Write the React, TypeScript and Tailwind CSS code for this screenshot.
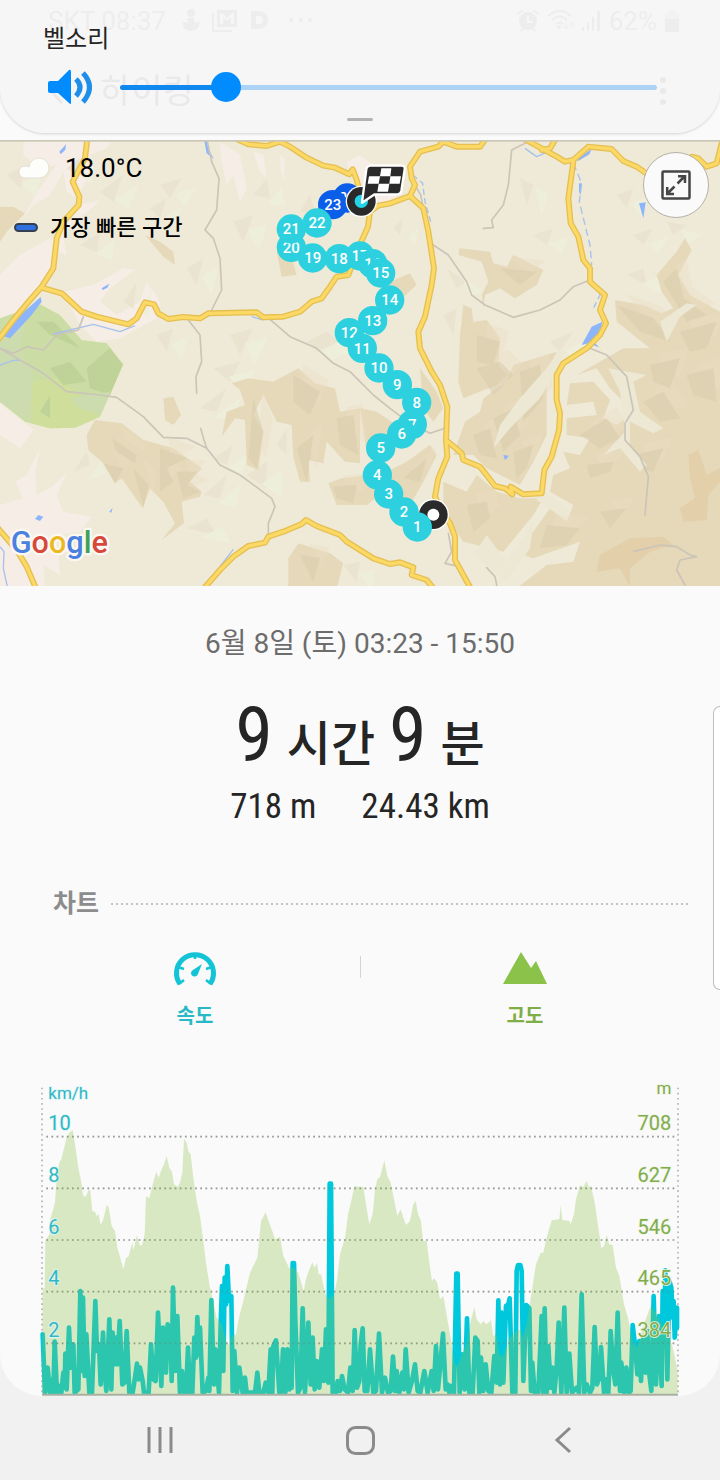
import { useState } from "react";
import type { CSSProperties, ReactNode } from "react";

const SPEED =
  "128,790 135,965 143,890 150,965 157,925 160,965 164,812 171,965 178,945 184,965 190,905 194,950 196,848 200,955 207,770 212,890 215,885 220,820 224,965 235,955 241,660 246,900 249,680 254,915 259,790 268,965 276,965 286,690 291,840 297,820 302,940 309,785 314,900 319,960 328,745 334,955 338,785 343,880 348,800 352,880 359,750 367,940 373,935 380,780 388,965 398,965 405,920 411,878 416,925 420,890 428,930 432,965 446,965 453,820 460,925 467,930 474,725 484,945 489,770 498,905 503,760 509,850 511,765 515,930 519,650 526,900 532,735 540,965 546,900 553,965 558,965 564,830 570,965 573,910 577,965 583,800 588,860 592,738 597,850 600,770 608,965 618,960 625,920 628,960 634,687 642,940 646,835 657,965 662,760 666,645 670,900 674,620 678,700 682,585 687,690 694,675 698,960 703,840 711,965 718,890 728,965 735,920 740,965 765,965 772,905 778,965 790,965 797,935 805,965 812,835 817,965 820,825 828,808 838,965 843,965 849,835 856,965 862,835 868,955 872,845 875,950 878,576 882,576 886,750 894,965 901,950 908,712 915,965 925,755 932,940 938,800 944,955 950,870 958,950 966,835 972,930 978,775 985,935 989,338 993,338 998,965 1008,965 1013,930 1020,960 1026,915 1034,955 1044,965 1051,890 1058,960 1064,777 1071,950 1078,930 1082,820 1088,772 1094,960 1102,960 1110,835 1120,965 1128,960 1137,788 1146,965 1155,920 1164,965 1172,960 1179,857 1186,960 1190,900 1198,965 1207,905 1212,955 1217,835 1226,965 1236,930 1245,880 1253,960 1261,965 1273,900 1283,965 1295,900 1301,960 1308,825 1314,955 1321,880 1329,788 1337,955 1343,940 1348,965 1354,945 1362,965 1369,608 1373,608 1379,965 1388,850 1394,955 1401,742 1408,965 1418,965 1426,800 1433,810 1438,965 1443,860 1450,960 1457,880 1465,960 1474,965 1483,855 1490,935 1495,688 1500,940 1505,725 1510,935 1518,705 1525,700 1529,682 1537,965 1546,965 1550,600 1554,582 1561,582 1565,600 1570,930 1579,702 1588,712 1593,960 1597,875 1604,965 1615,965 1625,735 1630,965 1634,712 1640,965 1645,825 1652,950 1657,890 1663,965 1670,890 1676,755 1684,965 1693,710 1700,965 1708,848 1716,965 1730,950 1737,965 1745,670 1753,965 1760,940 1770,965 1777,950 1784,768 1791,940 1798,920 1803,828 1812,965 1818,925 1825,965 1832,780 1840,900 1846,940 1853,725 1860,960 1864,875 1872,965 1879,890 1886,965 1892,960 1898,762 1906,830 1912,910 1918,810 1923,930 1930,800 1937,905 1942,780 1948,910 1954,960 1961,675 1968,940 1977,735 1985,945 1988,660 1993,820 1996,598 2002,925 2008,630 2014,650 2018,740 2021,690 2024,800 2031,710 2031,770";

const ALTITUDE =
  "126,970 128,655 134,650 136,510 148,490 152,440 165,395 170,320 178,275 184,265 190,240 200,200 208,185 218,177 225,220 235,290 245,340 249,372 255,378 261,370 266,355 271,360 277,420 286,424 290,435 296,430 302,462 310,445 320,402 326,408 335,465 345,480 352,530 362,565 370,595 378,560 385,558 397,515 400,538 411,492 420,525 427,520 434,490 438,375 448,382 458,340 469,302 476,320 485,295 492,280 500,255 508,290 516,302 522,340 533,348 540,335 547,305 552,203 560,215 565,240 572,250 580,320 590,390 600,435 610,510 620,590 630,650 640,690 650,740 665,760 680,815 685,822 695,795 708,790 718,735 730,690 750,605 772,560 783,450 797,424 804,445 815,475 825,505 840,498 850,555 868,592 880,590 895,605 911,660 918,625 926,600 937,574 944,590 951,576 956,610 963,610 975,665 985,685 1003,670 1012,620 1020,550 1035,500 1045,425 1055,385 1063,345 1080,348 1090,347 1098,400 1108,460 1118,430 1125,355 1132,325 1140,318 1153,268 1162,315 1172,335 1182,385 1192,435 1202,415 1210,440 1218,462 1230,450 1240,400 1247,390 1254,430 1263,450 1269,510 1280,510 1290,590 1296,630 1302,622 1312,635 1320,685 1330,675 1342,745 1352,800 1362,870 1372,888 1385,850 1400,820 1410,760 1423,708 1430,745 1442,760 1450,750 1460,760 1473,748 1480,795 1490,790 1498,850 1508,858 1530,800 1550,780 1560,775 1568,800 1580,760 1590,695 1600,630 1608,580 1622,545 1630,545 1640,500 1655,448 1678,445 1682,403 1687,447 1708,450 1712,460 1722,430 1728,385 1740,342 1750,348 1760,330 1766,347 1773,345 1785,400 1795,470 1804,532 1812,525 1820,492 1828,520 1838,522 1848,590 1858,615 1872,700 1885,745 1898,810 1910,830 1920,800 1935,750 1952,705 1970,730 1990,770 2010,800 2022,845 2033,900 2033,970";

const GRID = [
  { y: 197, speed: "10", altitude: "708" },
  { y: 352, speed: "8", altitude: "627" },
  { y: 507, speed: "6", altitude: "546" },
  { y: 662, speed: "4", altitude: "465" },
  { y: 817, speed: "2", altitude: "384" },
];

const STOPS: [number, number, number][] = [
  [24, 1042, 189], [23, 998, 209], [20, 874, 337], [21, 874, 282], [22, 951, 264],
  [17, 1080, 363], [18, 1018, 371], [19, 938, 369], [16, 1118, 386], [15, 1142, 414],
  [14, 1169, 495], [13, 1118, 557], [12, 1048, 593], [11, 1087, 640], [10, 1137, 699],
  [9, 1192, 749], [7, 1237, 868], [8, 1250, 802], [6, 1205, 897], [5, 1142, 939],
  [4, 1132, 1020], [3, 1166, 1077], [2, 1212, 1131],
];

const MAIN_ROADS = [
  "M262 10 L255 70 L218 140 L238 185 L236 210 L190 260 L170 310 L160 400 L125 455 L90 495 L40 555 L-10 620",
  "M125 458 L185 475 L245 530 L290 545 L385 568 L410 550 L435 502 L462 508 L475 535 L505 552 L550 546 L600 550 L625 535 L770 532 L790 547 L850 545 L900 530 L935 500 L965 490 L990 455 L1010 425 L1045 420 L1075 340 L1104 275 L1110 230 L1135 212 L1170 205 L1230 183",
  "M705 10 L745 28 L800 33 L840 20 L870 35 L920 68 L970 92 L1005 98 L1048 118 L1058 103 L1070 135 L1085 190",
  "M1458 10 L1440 35 L1370 35 L1330 20 L1315 35 L1260 50 L1230 95 L1235 130 L1245 150 L1230 183 L1270 220 L1285 290 L1302 400 L1295 450 L1275 545 L1255 590 L1260 640 L1295 710 L1320 750 L1342 815 L1338 915 L1342 965 L1315 1030 L1305 1085 L1325 1130 L1350 1165 L1365 1205 L1365 1275 L1412 1360",
  "M1570 10 L1625 40 L1670 65 L1695 80 L1720 75 L1765 35 L1835 42 L1870 78 L1910 95 L1960 130 L2020 140 L2075 65 L2095 70 L2120 95 L2150 85 L2165 25",
  "M1668 10 L1650 40 L1625 45",
  "M1720 80 L1705 190 L1712 265 L1735 305 L1750 375 L1770 400 L1770 440 L1815 480 L1800 525 L1818 565 L1800 600 L1760 640 L1690 685 L1670 720 L1670 795 L1680 835 L1677 885 L1655 965 L1633 1005 L1625 1075 L1570 1078 L1532 1055 L1537 1078 L1515 1060 L1485 1053 L1440 995 L1390 975 L1385 955 L1338 915",
  "M-10 1175 L50 1245 L80 1295 L108 1360",
  "M610 1362 L660 1305 L700 1265 L745 1233 L795 1223 L805 1205 L850 1190 L905 1167 L918 1155 L950 1173 L1020 1200 L1040 1220 L1120 1270 L1170 1287 L1200 1282 L1240 1297 L1235 1320 L1280 1335 L1302 1362",
];

const MINOR_ROADS = [
  "M620 10 L635 80 L657 130 L650 225 L615 285 L640 310 L660 370 L665 465 L635 525",
  "M565 555 L600 600 L605 680 L588 725 L590 775",
  "M810 553 L870 605 L950 640 L1000 685 L1050 710 L1080 740 L1120 780 L1170 820 L1230 865 L1290 895 L1335 880",
  "M0 640 L60 675 L130 715 L200 770 L300 780 L350 787 L430 845 L490 907 L560 910 L620 940 L660 990 L720 1020 L815 1090 L825 1115 L805 1165 L805 1200",
  "M602 880 L612 915 L620 940",
  "M1575 25 L1535 45 L1525 150 L1510 210 L1475 255 L1480 278 L1450 280",
  "M1300 330 L1345 360 L1400 440 L1415 480 L1455 510 L1540 547 L1620 525 L1680 495 L1720 455 L1770 435",
  "M1770 640 L1820 660 L1880 725 L1900 825 L1875 865 L1875 915 L1920 965 L1945 1025 L1935 1140",
  "M1245 150 L1262 180 L1270 220",
  "M1345 1195 L1355 1250 L1335 1285 L1365 1292",
  "M1460 1298 L1485 1325 L1492 1360",
  "M250 545 L235 585 L170 600 L130 645 L80 635 L40 655 L0 640",
  "M1900 1250 L1980 1230 L2030 1235 L2070 1260 L2090 1265 L2040 1275 L2030 1305 L2055 1350",
];

const HILLS_LIGHT = [
  "M260 900 L285 855 L365 865 L430 915 L520 940 L605 1000 L570 1040 L605 1070 L600 1085 L545 1100 L552 1165 L485 1215 L525 1165 L490 1100 L450 1060 L428 1120 L400 1080 L365 1030 L345 1045 L310 985 L265 945Z",
  "M695 745 L745 730 L820 740 L895 700 L945 745 L1005 760 L1020 830 L1080 820 L1080 985 L1035 980 L980 920 L970 985 L925 975 L930 1040 L900 1040 L880 965 L875 870 L830 860 L790 780 L760 840 L790 890 L775 1005 L740 990 L735 855 L705 850 L665 905 L680 830 L735 810 L720 765Z",
  "M985 1045 L1025 1030 L1110 1020 L1140 1080 L1100 1110 L1010 1110Z",
  "M490 790 L520 785 L543 840 L520 870 L495 855Z",
  "M865 1270 L895 1225 L990 1255 L1030 1285 L1010 1360 L865 1360Z",
  "M0 215 L40 215 L75 235 L20 290 L0 320Z",
  "M435 300 L480 320 L520 350 L525 390 L490 365Z",
  "M830 350 L845 320 L870 350 L890 420 L845 425Z",
  "M1378 340 L1470 350 L1480 385 L1520 395 L1540 360 L1630 405 L1610 450 L1545 490 L1500 460 L1455 480 L1450 520 L1445 480 L1465 440 L1445 380 L1375 360Z",
  "M1390 510 L1415 520 L1420 560 L1460 555 L1500 610 L1495 690 L1520 720 L1490 750 L1390 790 L1375 740 L1380 600Z",
  "M1845 495 L1930 510 L1985 535 L2020 520 L1985 470 L1970 420 L2030 350 L2055 310 L2075 345 L2035 420 L2070 480 L2160 530 L2160 1360 L1550 1360 L1640 1290 L1720 1280 L1740 1220 L1600 1270 L1540 1250 L1600 1190 L1650 1120 L1700 1160 L1720 1110 L1650 1070 L1660 1020 L1710 1000 L1690 950 L1740 960 L1770 910 L1700 900 L1700 850 L1790 840 L1780 800 L1700 810 L1710 745 L1780 740 L1830 795 L1810 850 L1850 870 L1900 835 L1990 890 L1890 820 L1830 760 L1790 700 L1730 720 L1870 640 L1950 640 L1850 560Z",
  "M1395 860 L1440 830 L1450 790 L1520 740 L1540 690 L1670 650 L1640 720 L1640 900 L1600 980 L1560 1050 L1460 1000 L1420 960 L1360 960Z",
  "M1330 1040 L1400 1070 L1430 1020 L1490 1070 L1560 1090 L1630 1090 L1600 1140 L1510 1250 L1390 1220 L1330 1130Z",
  "M1080 820 L1130 830 L1190 870 L1150 980 L1100 950Z",
  "M1260 700 L1310 770 L1330 820 L1300 860 L1270 820Z",
  "M1170 440 L1230 415 L1250 450 L1195 500 L1170 490Z",
  "M1160 1010 L1220 980 L1290 930 L1310 960 L1270 1040 L1230 1110 L1180 1060Z",
];

const HILLS_DARK = [
  "M335 910 L410 960 L405 985 L350 950Z",
  "M480 940 L560 970 L500 1000 L520 1040 L480 1070Z",
  "M530 1010 L590 1010 L560 1050 L600 1070 L550 1090Z",
  "M310 985 L370 1000 L345 1045Z",
  "M400 1000 L445 1050 L430 1118Z",
  "M760 790 L790 890 L770 1000 L745 970Z",
  "M880 720 L960 770 L930 840 L880 800Z",
  "M890 940 L940 900 L920 1040Z",
  "M1010 850 L1060 840 L1075 960 L1020 930Z",
  "M1000 1055 L1070 1050 L1060 1105 L1010 1090Z",
  "M900 1260 L960 1270 L940 1340Z",
  "M1430 600 L1500 620 L1480 690 L1430 680Z",
  "M1500 400 L1610 410 L1560 450Z",
  "M1990 440 L2030 400 L2050 490 L2120 540 L2060 560Z",
  "M1850 510 L1960 550 L2010 620 L1920 590Z",
  "M2040 590 L2150 560 L2120 640 L2070 650Z",
  "M1950 690 L2040 670 L2010 760 L1960 740Z",
  "M2060 720 L2140 700 L2150 800 L2080 780Z",
  "M1930 800 L1990 770 L2040 850 L1980 860Z",
  "M1760 990 L1840 980 L1830 1010 L1770 1030Z",
  "M1900 960 L1990 940 L1960 1010 L1910 1000Z",
  "M1740 900 L1820 850 L1860 910 L1800 940Z",
  "M1640 1170 L1740 1180 L1700 1230 L1620 1240Z",
  "M1800 1130 L1880 1120 L1830 1180Z",
  "M1430 700 L1500 680 L1540 720 L1480 780Z",
  "M1560 710 L1620 690 L1630 790 L1570 860Z",
  "M1480 850 L1540 820 L1560 900 L1510 950Z",
  "M1420 900 L1470 880 L1490 970 L1440 960Z",
  "M1540 950 L1600 930 L1580 1000 L1550 1030Z",
  "M1400 1110 L1460 1100 L1470 1150 L1420 1190Z",
  "M1210 1030 L1280 970 L1260 1040Z",
];

const HILLS_ORANGE = [
  "M2065 960 L2095 945 L2120 1020 L2160 1000 L2160 1040 L2125 1080 L2120 1155 L2050 1160 L2040 1120 L2085 1090 L2070 1030Z",
  "M1800 1260 L1890 1210 L1990 1205 L2020 1230 L1950 1250 L1890 1300 L1890 1355 L1860 1300 L1790 1310Z",
];

const SHADE = [
  "M300 170 L370 120 L340 200Z", "M480 150 L545 130 L510 190Z", "M450 220 L500 190 L480 250Z",
  "M240 330 L300 290 L290 350Z", "M560 400 L610 370 L590 450Z", "M700 260 L760 240 L730 320Z",
  "M760 180 L800 130 L810 190Z", "M900 230 L930 180 L950 240Z", "M370 500 L410 440 L400 520Z",
  "M470 600 L520 580 L500 650Z", "M690 600 L760 580 L720 660Z", "M600 820 L680 760 L650 830Z",
  "M610 1080 L680 1020 L660 1090Z", "M560 1180 L620 1150 L650 1200Z", "M740 1020 L800 980 L800 1060Z",
  "M830 930 L860 880 L860 960Z", "M220 1010 L260 950 L270 990Z", "M640 970 L700 930 L680 990Z",
  "M1340 400 L1400 440 L1370 460Z", "M1560 130 L1600 150 L1580 210Z", "M1600 300 L1660 280 L1640 330Z",
  "M1850 180 L1900 160 L1880 220Z", "M1900 300 L1960 280 L1930 330Z", "M2000 260 L2060 270 L2020 300Z",
  "M1180 280 L1210 250 L1200 300Z", "M920 620 L980 590 L1020 620 L950 650Z", "M1030 1290 L1080 1280 L1070 1340Z",
  "M200 100 L240 70 L230 120Z", "M20 120 L80 90 L60 160Z", "M640 700 L720 680 L690 740Z",
  "M1330 540 L1370 520 L1360 600Z", "M1880 420 L1930 400 L1940 450Z", "M1650 620 L1720 590 L1680 650Z",
];

const VALLEY = [
  "M660 20 L720 60 L740 160 L720 200 L700 120 L680 150 L665 80Z",
  "M760 50 L790 60 L800 130 L780 110Z",
  "M840 60 L855 70 L852 135 L842 110Z",
  "M70 15 L340 15 L320 40 L270 60 L280 100 L230 190 L200 170 L190 110 L150 180 L100 210 L70 250 L105 180 L170 90 L120 100 L70 60Z",
  "M0 420 L60 360 L150 310 L170 320 L150 420 L90 490 L40 545 L0 560Z",
  "M240 210 L300 195 L280 215 L220 260 L190 310 L200 360 L175 350 L180 290Z",
  "M190 470 L280 450 L370 400 L405 405 L330 460 L300 500 L350 540 L420 500 L440 440 L480 500 L470 550 L360 610 L290 620 L240 570Z",
  "M0 805 L70 860 L100 885 L60 940 L0 900Z",
  "M45 1040 L80 1020 L120 940 L105 1010 L110 1080 L150 1060 L200 1015 L170 1080 L190 1130 L275 1145 L240 1190 L170 1200 L180 1320 L130 1290 L135 1360 L0 1360 L0 1110 L70 1090Z",
  "M1120 90 L1080 60 L1040 80 L1060 140 L1140 220 L1200 190 L1150 160Z",
];

const TEXT_FONT = "font-['Roboto','Noto_Sans_CJK_KR',sans-serif]";

function HikeMap() {
  return (
    <svg
      viewBox="0 15 2160 1338"
      role="img"
      aria-label="하이킹 경로 지도"
      className={`block h-auto w-full ${TEXT_FONT}`}
    >
      <rect y="15" width="2160" height="1338" fill="#efead7" />
      <g fill="#f6ede6">{VALLEY.map((d) => <path key={d} d={d} />)}</g>
      <g fill="#e9e3cf">{SHADE.map((d) => <path key={d} d={d} />)}</g>
      <g fill="#eeefdb" transform="translate(45 26)">{SHADE.map((d) => <path key={d} d={d} />)}</g>
      <g fill="#e5d9ba">{HILLS_LIGHT.map((d) => <path key={d} d={d} />)}</g>
      <g fill="#eddcc4" opacity=".35" transform="translate(28 -34)">{HILLS_DARK.map((d) => <path key={d} d={d} />)}</g>
      <g fill="#dbceae" opacity=".6">{HILLS_DARK.map((d) => <path key={d} d={d} />)}</g>
      <g fill="#e3cfaa">{HILLS_ORANGE.map((d) => <path key={d} d={d} />)}</g>
      <g fill="#ece8d3">
        <path d="M1560 790 L1640 700 L1680 640 L1700 650 L1620 790 L1530 880 L1480 940 L1500 870Z" />
        <path d="M1825 700 L1940 720 L1900 740 L1920 830 L1990 880 L1960 895 L1890 860 L1890 930 L1940 990 L1920 1010 L1860 940 L1810 960 L1875 890 L1860 770Z" />
        <path d="M1620 1060 L1715 1130 L1680 1142 L1610 1095Z" />
        <path d="M1980 560 L2060 505 L2090 510 L2040 545 L2000 620Z" />
        <path d="M1460 1200 L1520 1280 L1600 1160 L1590 1240 L1520 1340 L1420 1260Z" />
      </g>
      <path fill="#cbdda5" d="M0 550 L120 508 L180 540 L245 615 L320 625 L370 688 L300 845 L225 878 L150 880 L75 860 L0 800Z" />
      <path fill="#cfdf9b" d="M90 740 L180 730 L260 800 L300 845 L225 878 L150 880 L95 865Z" />
      <g fill="#bfd298">
        <path d="M260 700 L330 640 L368 690 L330 780 L270 760Z" />
        <path d="M150 700 L210 680 L260 740 L190 750Z" />
        <path d="M110 560 L160 560 L240 640 L150 600Z" />
        <path d="M120 830 L150 780 L150 850Z" />
      </g>
      <g fill="#cddcae">
        <path d="M0 600 L80 560 L60 640 L100 720 L90 860 L0 800Z" />
        <path d="M210 790 L330 770 L300 840 L240 820Z" />
      </g>
      <g fill="#8db5fb">
        <path d="M122 486 L125 500 L95 540 L30 610 L12 604 L55 545Z" />
        <path d="M178 50 L198 28 L196 44 L182 58Z" />
        <path d="M305 460 L328 446 L322 458 L308 465Z" />
        <path d="M618 12 L626 45 L642 72 L620 55 L612 12Z" />
        <path d="M1917 205 L1937 202 L1930 250Z" />
        <path d="M1807 560 L1775 575 L1745 630 L1765 625 L1800 592Z" />
        <path d="M1775 615 L1798 637 L1778 630Z" />
        <path d="M1730 72 L1775 42 L1768 58 L1735 78Z" />
        <path d="M1737 145 L1745 145 L1742 180 L1737 170Z" />
        <path d="M105 1152 L115 1140 L130 1145 L120 1158Z" />
        <path d="M328 1130 L338 1118 L334 1133Z" />
        <path d="M1510 960 L1527 962 L1515 976Z" />
      </g>
      <g fill="none" stroke="#a6c1ee" strokeWidth="4" strokeLinejoin="round">
        <path d="M160 597 L280 568 L360 590 L405 572" />
        <path d="M755 545 L790 555" />
        <path d="M640 1320 L700 1243" />
        <path d="M0 1235 L12 1250 L10 1300 L22 1355" />
        <path d="M0 690 L40 676 L60 675" />
        <path d="M1720 85 L1745 145 L1738 200 L1755 270 L1770 330 L1775 390" strokeDasharray="22 12" />
        <path d="M1238 120 L1268 145 L1275 200 L1292 260" strokeDasharray="18 10" />
        <path d="M1575 40 L1610 65 L1645 50" />
        <path d="M1790 450 L1800 480 L1780 520" strokeDasharray="18 10" />
      </g>
      <g fill="none" stroke="#cbc4b8" strokeWidth="5" strokeLinejoin="round" strokeLinecap="round">
        {MINOR_ROADS.map((d) => <path key={d} d={d} />)}
      </g>
      <g fill="none" strokeLinejoin="round" strokeLinecap="round">
        <g stroke="#e5bf52" strokeWidth="18">{MAIN_ROADS.map((d) => <path key={d} d={d} />)}</g>
        <g stroke="#fcd965" strokeWidth="10">{MAIN_ROADS.map((d) => <path key={d} d={d} />)}</g>
      </g>
      <rect y="15" width="2160" height="5" fill="#cbc7b6" />

      <g>
        <circle cx="1300" cy="1139" r="47" fill="#fff" />
        <circle cx="1300" cy="1139" r="43" fill="#2a2a2a" />
        <circle cx="1300" cy="1139" r="18" fill="#fff" />
      </g>
      <g className="text-[45px] font-medium" textAnchor="middle">
        {STOPS.map(([n, x, y]) => (
          <g key={n}>
            <circle cx={x} cy={y} r="44" fill={n > 22 ? "#0a5ee8" : "#2dd0de"} />
            <text x={x} y={y + 16} fill="#fff">{n}</text>
          </g>
        ))}
        <circle cx="1252" cy="1176" r="44" fill="#2dd0de" />
        <text x="1252" y="1192" fill="#fff">1</text>
      </g>
      <circle cx="1084" cy="199" r="47" fill="#fff" />
      <circle cx="1084" cy="199" r="43" fill="#2a2a2a" />
      <circle cx="1084" cy="199" r="20" fill="#22d3ea" />
      <path
        d="M1112 92 H1205 Q1216 92 1214 103 L1204 168 Q1202 178 1192 178 H1124 L1086 203 L1099 103 Q1101 92 1112 92Z"
        fill="#2a2a2a"
        stroke="#fff"
        strokeWidth="7"
        strokeLinejoin="round"
      />
      <g fill="#fff">
        <path d="M1144 100 L1174 100 L1171 124 L1140 124Z" />
        <path d="M1107 124 L1140 124 L1136 146 L1103 146Z" />
        <path d="M1171 124 L1203 124 L1199 146 L1168 146Z" />
        <path d="M1136 146 L1168 146 L1164 170 L1132 170Z" />
      </g>
      <text
        x="32"
        y="1254"
        className="text-[92px] font-medium [paint-order:stroke]"
        stroke="#fbf8f2"
        strokeWidth="14"
        strokeLinejoin="round"
      >
        <tspan fill="#4a80e0">G</tspan>
        <tspan fill="#d6483c">o</tspan>
        <tspan fill="#ecb823">o</tspan>
        <tspan fill="#4a80e0">g</tspan>
        <tspan fill="#3fa158">l</tspan>
        <tspan fill="#d6483c">e</tspan>
      </text>
    </svg>
  );
}

function HikeChart() {
  return (
    <svg
      viewBox="0 0 2160 975"
      role="img"
      aria-label="속도와 고도 차트"
      className={`block h-auto w-full ${TEXT_FONT}`}
    >
      <g stroke="#b3b3b3" strokeWidth="5" strokeDasharray="5 10.4">
        {GRID.map(({ y }) => <path key={y} d={`M139 ${y} H2026`} />)}
        <path d="M126 50 V968" />
        <path d="M2034 50 V968" />
      </g>
      <polyline
        points={SPEED}
        fill="none"
        stroke="#00c8dc"
        strokeWidth="14"
        strokeLinejoin="round"
        strokeLinecap="round"
      />
      <polygon points={ALTITUDE} fill="#8bc34a" fillOpacity=".315" />
      <g stroke="#6f7c68" strokeOpacity=".4" strokeWidth="5" strokeDasharray="5 10.4">
        {GRID.map(({ y }) => <path key={y} d={`M139 ${y} H2026`} />)}
      </g>
      <path d="M126 971 H2034" stroke="#a9afa1" strokeWidth="6" />
      <g fill="#31b6c3" stroke="#dff7f8" strokeWidth="5" className="[paint-order:stroke]">
        <text x="145" y="83" className="text-[51px]">km/h</text>
        {GRID.map(({ y, speed }) => (
          <text key={y} x="145" y={y - 19} className="text-[60px]">{speed}</text>
        ))}
      </g>
      <g fill="#81ac4e" stroke="#eef5e4" strokeWidth="5" textAnchor="end" className="[paint-order:stroke]">
        <text x="2014" y="70" className="text-[51px]">m</text>
        {GRID.map(({ y, altitude }) => (
          <text key={y} x="2014" y={y - 19} className="text-[60px]">{altitude}</text>
        ))}
      </g>
    </svg>
  );
}

function NavButton({ label, children }: { label: string; children: ReactNode }) {
  return (
    <button type="button" aria-label={label} className="flex h-12 w-12 items-center justify-center">
      <svg viewBox="0 0 32 32" className="h-8 w-8" fill="none" stroke="#8b8b8b" strokeWidth="3">
        {children}
      </svg>
    </button>
  );
}

function StatusBar() {
  return (
    <div className="flex h-[42px] items-center pr-[41px] pl-12 text-[26px] text-[#8c8c8c]">
      <span>SKT 08:37</span>
      <svg viewBox="0 0 130 24" className="ml-4 h-6 w-[130px]" fill="currentColor">
        <circle cx="9" cy="4" r="4" />
        <path d="M6 9h6l1 5 5-2-2 7q-7 6-14 0l-2-7 5 2z" />
        <path d="M32 4v17h18v2H30V4z" />
        <path d="M35 1h20v17H35zM38 4v11h3V8l4 4 4-4v7h3V4h-2l-5 5-5-5z" fillRule="evenodd" />
        <path d="M69 2h8a9 9 0 0 1 0 18h-8zM74 7v8h3a4 4 0 0 0 0-8z" fillRule="evenodd" />
        <circle cx="109" cy="11" r="2" /><circle cx="119" cy="11" r="2" /><circle cx="128" cy="11" r="2" />
      </svg>
      <svg viewBox="0 0 84 24" className="mr-2 ml-auto h-6 w-[84px]" fill="currentColor">
        <path d="M11 3a9 9 0 1 1 0 18a9 9 0 0 1 0-18M10 7v7h6v-2h-4V7z" fillRule="evenodd" />
        <path d="M1 5l5-4M16 1l5 4M4 22l3-3M18 22l-3-3" stroke="currentColor" strokeWidth="2" />
        <g fill="none" stroke="currentColor" strokeWidth="2">
          <path d="M31 7q12-10 23 0M35 11q8-7 15 0M39 15q4-3 7 0" />
        </g>
        <circle cx="42" cy="18" r="2" />
        <path d="M49 14v5M46 17l3 3 3-3M55 19v-5M52 16l3-3 3 3" fill="none" stroke="currentColor" />
        <path d="M65 18h2v4h-2zM70 13h2v9h-2zM75 8h2v14h-2zM80 2h3v20h-3z" />
      </svg>
      <span>62%</span>
      <svg viewBox="0 0 14 22" className="ml-2 h-[22px] w-[14px]" fill="currentColor">
        <path d="M0 9h14v13H0z" />
        <path d="M0 3h4V0h6v3h4v6H0z" opacity=".4" />
      </svg>
    </div>
  );
}

export default function App() {
  const [volume, setVolume] = useState(18);
  return (
    <div className={`relative min-h-screen bg-[#f1f1f1] text-[#252525] ${TEXT_FONT}`}>
      <div className="overflow-hidden rounded-b-[42px] bg-[#fafafa]">
        <header className="relative h-[140px]">
          <StatusBar />
          <div className="flex h-[98px] items-center pr-[53px] pl-12 text-[#606060]">
            <svg viewBox="0 0 16 28" className="h-7 w-4" fill="none" stroke="currentColor" strokeWidth="3">
              <path d="M14 2L3 14l11 12" />
            </svg>
            <h1 className="ml-9 text-[34px]">하이킹</h1>
            <svg viewBox="0 0 8 28" className="ml-auto h-7 w-2" fill="currentColor">
              <circle cx="4" cy="3" r="3" /><circle cx="4" cy="14" r="3" /><circle cx="4" cy="25" r="3" />
            </svg>
          </div>

          <section className="absolute inset-x-0 top-0 flex h-[133px] flex-col rounded-b-[46px] bg-[#f5f5f5]/92 px-[43px] pt-[21px] shadow-[0_1px_3px_rgba(0,0,0,0.16)]">
            <label htmlFor="volume" className="text-2xl leading-9">벨소리</label>
            <div className="mt-[14px] flex h-8 items-center pr-5">
              <svg viewBox="0 0 46 36" className="ml-[3px] h-9 w-[46px]" fill="#008cff">
                <path d="M4 12 H12 L23 1 Q25 0 25 3 V34 Q25 36 23 34 L12 24 H4 Q2 24 2 22 V14 Q2 12 4 12Z" />
                <path d="M30 10 Q38 18 30 27 M37 4 Q50 18 37 33" fill="none" stroke="#1e8ee8" strokeWidth="5" />
              </svg>
              <input
                id="volume"
                type="range"
                min={0}
                max={100}
                value={volume}
                onChange={(e) => setVolume(Number(e.target.value))}
                style={{ "--fill": `${volume}%` } as CSSProperties}
                className="ml-7 h-8 min-w-0 flex-1 cursor-pointer appearance-none bg-transparent [&::-webkit-slider-runnable-track]:h-[5px] [&::-webkit-slider-runnable-track]:rounded-full [&::-webkit-slider-runnable-track]:bg-[linear-gradient(to_right,#1088ef_var(--fill),#acd3f6_var(--fill))] [&::-webkit-slider-thumb]:-mt-[13px] [&::-webkit-slider-thumb]:h-[30px] [&::-webkit-slider-thumb]:w-[30px] [&::-webkit-slider-thumb]:appearance-none [&::-webkit-slider-thumb]:rounded-full [&::-webkit-slider-thumb]:bg-[#008cff]"
              />
            </div>
            <div className="mx-auto mt-[15px] h-[3px] w-[26px] rounded-full bg-[#b3b3b3]" />
          </section>
        </header>

        <section className="relative">
          <HikeMap />
          <div className="absolute top-0 left-0 pt-2 text-black">
            <div className="flex h-10 items-center pl-[18px] text-[26px]">
              <svg viewBox="0 0 32 22" className="h-[22px] w-8" fill="#fdfdfc" stroke="#e5e0d4" strokeWidth="1">
                <path d="M7 21 A6 6 0 0 1 7 9 Q10 9 11 10 A10 10 0 1 1 21 21Z" />
              </svg>
              <span className="ml-[15px]">18.0°C</span>
            </div>
            <div className="mt-[19px] flex h-10 items-center pl-[14px] text-[22px] font-medium">
              <span className="h-[9px] w-6 rounded-full border-2 border-[#344050] bg-[#2e70e0]" />
              <span className="ml-3">가장 빠른 구간</span>
            </div>
          </div>
          <button
            type="button"
            aria-label="지도 확대"
            className="absolute top-3 right-[11px] flex h-[66px] w-[66px] items-center justify-center rounded-full border border-[#b5b1a6] bg-[#fafafa]"
          >
            <svg viewBox="0 0 30 30" className="h-[30px] w-[30px]" fill="none" stroke="#464646" strokeWidth="2.5">
              <rect x="1.5" y="1.5" width="27" height="27" rx="1" />
              <path d="M16.500 13.500 L23.500 6.500 M17 6.200 H24 V13 M13.500 16.500 L6.500 23.500 M6.200 17 V24 H13" />
            </svg>
          </button>
        </section>

        <section className="pt-10 text-center">
          <p className="text-[28px] leading-9 text-[#6c6c6c]">6월 8일 (토) 03:23 - 15:50</p>
          <p className="mt-[33px] flex items-baseline justify-center gap-[14px] font-['Roboto_Condensed','Noto_Sans_CJK_KR',sans-serif] leading-[80px]">
            <span className="text-[76px]">9</span>
            <span className="text-5xl leading-[80px] font-medium">시간</span>
            <span className="text-[76px]">9</span>
            <span className="text-5xl leading-[80px] font-medium">분</span>
          </p>
          <p className="flex justify-center gap-[45px] font-['Roboto_Condensed','Roboto',sans-serif] text-[35px] leading-[44px]">
            <span>718 m</span>
            <span>24.43 km</span>
          </p>
        </section>

        <section className="mt-[57px]">
          <h2 className="flex items-center gap-3 pr-8 pl-[53px] text-[25px] leading-9 font-bold text-[#8c8c8c]">
            차트
            <span className="h-[2px] flex-1 bg-[repeating-linear-gradient(to_right,#c4c4c4_0,#c4c4c4_2px,transparent_2px,transparent_5px)]" />
          </h2>
          <div className="relative mt-[26px] grid grid-cols-2 px-[30px] text-xl font-bold">
            <button type="button" className="flex flex-col items-center text-[#27b9c5]">
              <svg viewBox="0 0 44 38" className="h-[38px] w-11" fill="none" stroke="#13c3d6" strokeWidth="5">
                <path d="M7 36 A18.500 18.500 0 1 1 37 36" />
                <path d="M22 5v6M5 19l6 2M39 19l-6 2M6 36l5-4M38 36l-5-4" strokeWidth="2.500" />
                <path d="M29 16 L24.500 27 Q21.500 30 18.500 27 Q17 24 20 22Z" fill="#13c3d6" stroke="none" />
              </svg>
              <span className="mt-[14px] leading-8">속도</span>
            </button>
            <button type="button" className="flex flex-col items-center text-[#7fae47]">
              <svg viewBox="0 0 44 38" className="h-[38px] w-11" fill="#8bc34a">
                <path d="M0 36 L18 4 L28 20 L33 13 L44 36Z" />
              </svg>
              <span className="mt-[14px] leading-8">고도</span>
            </button>
            <span className="absolute top-2 left-1/2 h-[22px] w-px bg-[#d4d4d4]" />
          </div>
        </section>

        <div className="mt-[39px]">
          <HikeChart />
        </div>
      </div>

      <nav className="flex h-[88px] items-center justify-around px-14">
        <NavButton label="최근 앱">
          <path d="M8 3V29M19 3V29M30 3V29" />
        </NavButton>
        <NavButton label="홈">
          <rect x="3.500" y="3.500" width="26" height="26" rx="8" />
        </NavButton>
        <NavButton label="뒤로">
          <path d="M23 4L10 16L23 28" />
        </NavButton>
      </nav>

      <div className="absolute top-[706px] right-0 h-[284px] w-[7px] rounded-l-lg border border-r-0 border-[#bdbdbd] bg-white" />
    </div>
  );
}
